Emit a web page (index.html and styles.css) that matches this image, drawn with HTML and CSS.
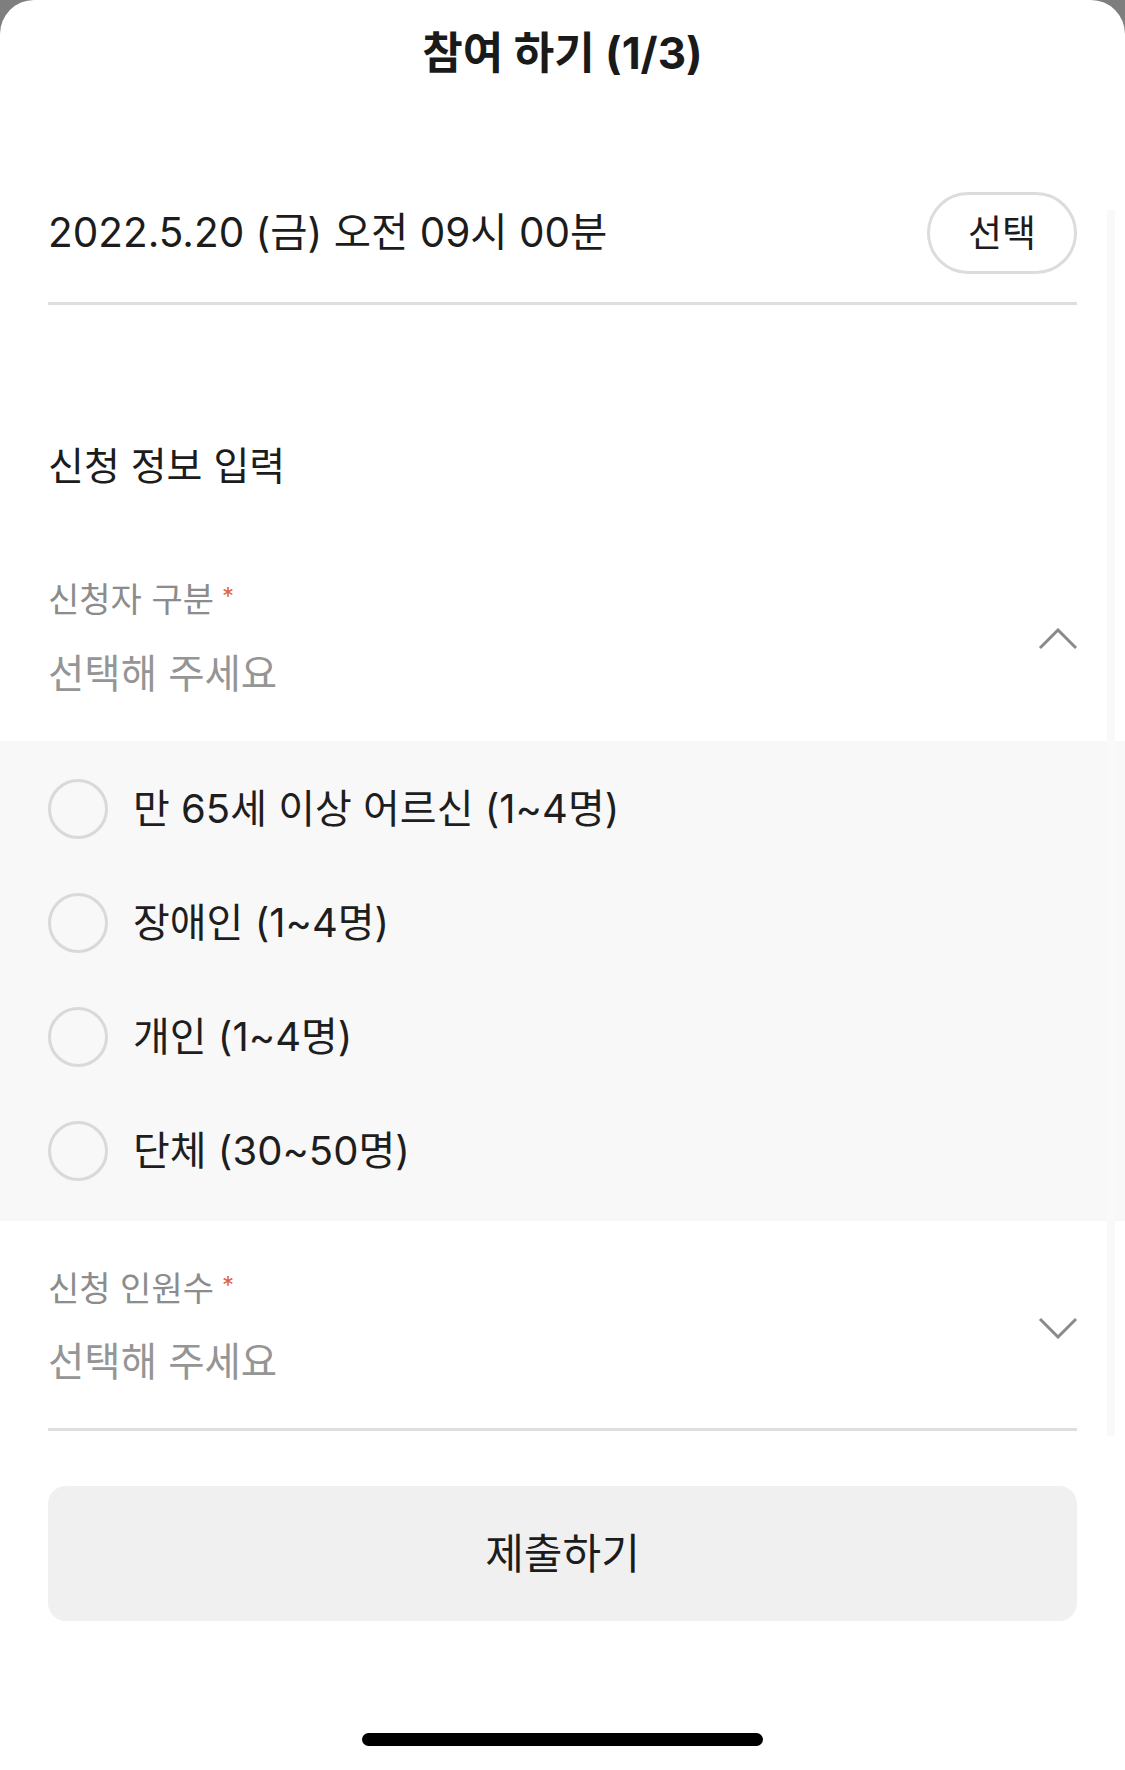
FILE: index.html
```html
<!DOCTYPE html>
<html lang="ko">
<head>
<meta charset="utf-8">
<title>참여 하기</title>
<link rel="stylesheet" href="styles.css">
</head>
<body>
<div class="sheet">
  <div class="scroll-strip"></div>
  <header class="header"><h1 class="title">참여 하기 (1/3)</h1></header>

  <div class="date-row">
    <span class="date-text">2022.5.20 (금) 오전 09시 00분</span>
    <button class="pill-btn">선택</button>
  </div>

  <h2 class="section-title">신청 정보 입력</h2>

  <div class="field field-open">
    <div class="field-texts">
      <div class="field-label">신청자 구분<span class="req">*</span></div>
      <div class="field-value">선택해 주세요</div>
    </div>
    <svg class="chevron" width="40" height="22" viewBox="0 0 40 22"><polyline points="2,20 20,2 38,20" fill="none" stroke="#8a8a8a" stroke-width="3"/></svg>
  </div>

  <ul class="options">
    <li class="option"><span class="radio"></span><span class="option-text">만 65세 이상 어르신 (1~4명)</span></li>
    <li class="option"><span class="radio"></span><span class="option-text">장애인 (1~4명)</span></li>
    <li class="option"><span class="radio"></span><span class="option-text">개인 (1~4명)</span></li>
    <li class="option"><span class="radio"></span><span class="option-text">단체 (30~50명)</span></li>
  </ul>

  <div class="field field-closed">
    <div class="field-texts">
      <div class="field-label">신청 인원수<span class="req">*</span></div>
      <div class="field-value">선택해 주세요</div>
    </div>
    <svg class="chevron" width="40" height="22" viewBox="0 0 40 22"><polyline points="2,2 20,20 38,2" fill="none" stroke="#8a8a8a" stroke-width="3"/></svg>
  </div>

  <button class="submit">제출하기</button>

  <div class="home-indicator"></div>
</div>
</body>
</html>
```

FILE: styles.css
```css
* { box-sizing: border-box; }
html, body { margin: 0; padding: 0; }
body {
  background: #7e7e7e;
  font-family: Inter, "Noto Sans CJK KR", "Noto Sans", sans-serif;
  color: #1c1c1c;
}
.sheet {
  position: relative;
  background: #fff;
  border-radius: 34px 34px 0 0;
  min-height: 1770px;
  overflow: hidden;
}
.scroll-strip {
  position: absolute;
  left: 1107px;
  top: 210px;
  width: 8px;
  height: 1226px;
  background: #f9f9f9;
}
.header {
  height: 106px;
  display: flex;
  align-items: center;
  justify-content: center;
}
.title {
  margin: 0;
  font-size: 44px;
  font-weight: 700;
  line-height: 106px;
  color: #1a1a1a;
}
.date-row {
  margin: 0 48px;
  padding: 86px 0 28px;
  border-bottom: 3px solid #dedede;
  display: flex;
  align-items: center;
  justify-content: space-between;
}
.date-text {
  font-size: 40.5px;
  line-height: 82px;
}
.pill-btn {
  width: 150px;
  height: 82px;
  border: 3px solid #dcdcdc;
  border-radius: 41px;
  background: #fff;
  font-family: inherit;
  font-size: 37px;
  color: #1c1c1c;
  padding: 0 0 4px;
}
.section-title {
  margin: 0 48px;
  padding-top: 133px;
  font-size: 39px;
  font-weight: 400;
  line-height: 56px;
}
.field {
  margin: 0 48px;
  display: flex;
  align-items: center;
  justify-content: space-between;
}
.field-open { padding: 84px 0 41px; }
.field-closed {
  padding: 46px 0 40px;
  border-bottom: 3px solid #dedede;
}
.field-label {
  font-size: 34px;
  line-height: 44px;
  color: #8c8c8c;
}
.req {
  color: #e0643c;
  font-size: 24px;
  line-height: 1;
  margin-left: 8px;
  vertical-align: 7px;
}
.field-value {
  font-size: 39.5px;
  line-height: 52px;
  color: #959595;
}
.field-open .field-value { margin-top: 26px; }
.field-closed .field-value { margin-top: 25px; }
.chevron { display: block; margin-right: -1px; }
.options {
  list-style: none;
  margin: 0;
  padding: 12px 0;
  background: #f8f8f8;
}
.option {
  height: 114px;
  padding-left: 48px;
  display: flex;
  align-items: center;
}
.radio {
  width: 60px;
  height: 60px;
  border: 3px solid #d9d9d9;
  border-radius: 50%;
  flex: none;
  margin-bottom: 2px;
}
.option-text {
  margin-left: 25px;
  font-size: 40px;
  line-height: 56px;
  padding-bottom: 2px;
  color: #1e1e1e;
}
.submit {
  display: block;
  margin: 55px 48px 0;
  width: calc(100% - 96px);
  height: 135px;
  border: none;
  border-radius: 18px;
  background: #f0f0f0;
  font-family: inherit;
  font-size: 42px;
  color: #1c1c1c;
  padding: 0 0 6px;
}
.home-indicator {
  margin: 112px auto 0;
  width: 401px;
  height: 13px;
  border-radius: 7px;
  background: #000;
}
```
